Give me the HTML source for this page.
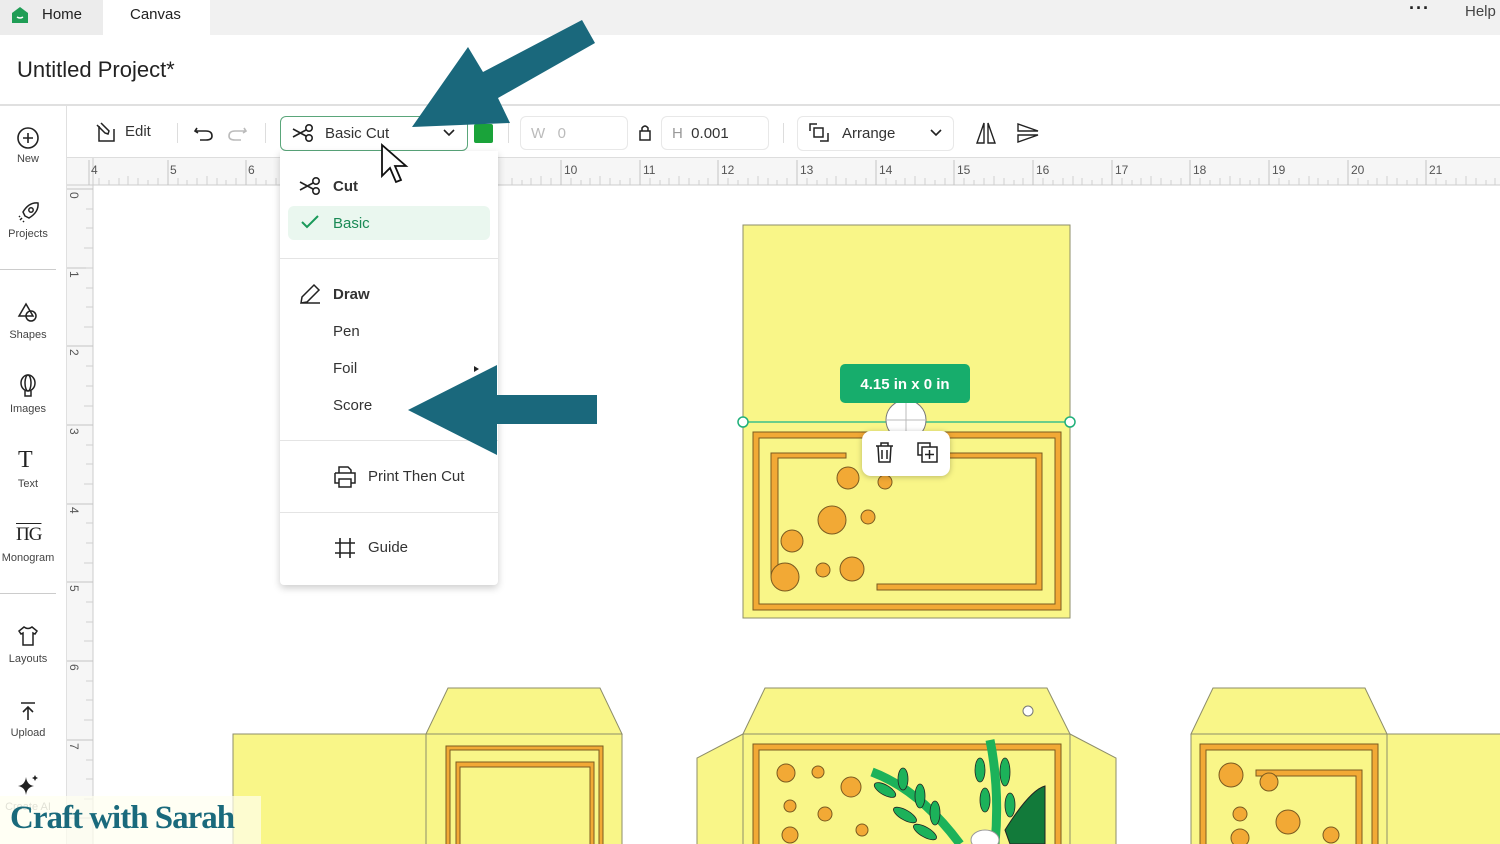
<!DOCTYPE html>
<html><head><meta charset="utf-8"><style>
*{margin:0;padding:0;box-sizing:border-box}
body{width:1500px;height:844px;overflow:hidden;background:#fff;font-family:"Liberation Sans",sans-serif;color:#222;position:relative}
.abs{position:absolute}
.lbl{position:absolute;width:56px;text-align:center;font-size:11px;color:#444}
.mi{position:absolute;font-size:15px;color:#333}
</style></head><body>
<!-- top tabs -->
<div class="abs" style="left:0;top:0;width:1500px;height:35px;background:#f1f1f1"></div>
<div class="abs" style="left:0;top:0;width:103px;height:35px;background:#ececec"></div>
<div class="abs" style="left:103px;top:0;width:107px;height:35px;background:#fff"></div>
<svg class="abs" style="left:10px;top:5px" width="20" height="20"><path d="M2 8 L10 2 L18 8 V18 H2 Z" fill="#1f9d55"/><path d="M7 12 Q10 14 13 12" stroke="#fff" stroke-width="1.5" fill="none"/></svg>
<div class="abs" style="left:42px;top:6px;font-size:15px;color:#222">Home</div>
<div class="abs" style="left:130px;top:6px;font-size:15px;color:#222">Canvas</div>
<div class="abs" style="left:1409px;top:-2px;font-size:18px;letter-spacing:1px;font-weight:bold">···</div>
<div class="abs" style="left:1465px;top:3px;font-size:15px;color:#444">Help</div>
<!-- title -->
<div class="abs" style="left:17px;top:57px;font-size:22px;color:#222">Untitled Project*</div>
<div class="abs" style="left:0;top:104px;width:1500px;height:2px;background:#e0e0e0"></div>
<!-- sidebar -->
<div class="abs" style="left:66px;top:106px;width:1px;height:738px;background:#e0e0e0"></div>
<svg class="abs" style="left:16px;top:126px" width="24" height="24" fill="none" stroke="#222" stroke-width="1.6"><circle cx="12" cy="12" r="10"/><path d="M12 7v10M7 12h10"/></svg>
<div class="lbl" style="left:0;top:153px">New</div>
<svg class="abs" style="left:17px;top:200px" width="24" height="24" fill="none" stroke="#222" stroke-width="1.5"><path d="M8 16 L6 12 Q12 2 21 3 Q22 12 12 18 Z"/><circle cx="14" cy="10" r="2.2"/><path d="M3 20l2-2M6 22l1-1M2 17l1-1"/></svg>
<div class="lbl" style="left:0;top:228px">Projects</div>
<div class="abs" style="left:0;top:269px;width:56px;height:1px;background:#ccc"></div>
<svg class="abs" style="left:16px;top:300px" width="24" height="24" fill="none" stroke="#222" stroke-width="1.5"><path d="M3 16 L10 4 L17 16 Z"/><circle cx="15" cy="16" r="5"/></svg>
<div class="lbl" style="left:0;top:329px">Shapes</div>
<svg class="abs" style="left:16px;top:374px" width="24" height="26" fill="none" stroke="#222" stroke-width="1.5"><ellipse cx="12" cy="9" rx="7" ry="8"/><ellipse cx="12" cy="9" rx="3" ry="8"/><path d="M9 17v5h6v-5"/></svg>
<div class="lbl" style="left:0;top:403px">Images</div>
<div class="abs" style="left:18px;top:447px;font-family:'Liberation Serif',serif;font-size:24px;color:#222">T</div>
<div class="lbl" style="left:0;top:478px">Text</div>
<div class="abs" style="left:16px;top:524px;font-family:'Liberation Serif',serif;font-size:19px;color:#222;letter-spacing:-1px;text-decoration:overline">ΠG</div>
<div class="lbl" style="left:0;top:552px">Monogram</div>
<div class="abs" style="left:0;top:593px;width:56px;height:1px;background:#ccc"></div>
<svg class="abs" style="left:16px;top:624px" width="24" height="24" fill="none" stroke="#222" stroke-width="1.5"><path d="M8 3 L3 7 L5 10 L7 9 V21 H17 V9 L19 10 L21 7 L16 3 Q12 6 8 3Z"/></svg>
<div class="lbl" style="left:0;top:653px">Layouts</div>
<svg class="abs" style="left:16px;top:699px" width="24" height="24" fill="none" stroke="#222" stroke-width="1.6"><path d="M5 4h14M12 21V8M7 13l5-5 5 5"/></svg>
<div class="lbl" style="left:0;top:727px">Upload</div>
<svg class="abs" style="left:16px;top:773px" width="24" height="24" fill="#222"><path d="M10 4 Q11 12 18 13 Q11 14 10 22 Q9 14 2 13 Q9 12 10 4Z"/><path d="M19 2l1 2 2 1-2 1-1 2-1-2-2-1 2-1z"/></svg>
<div class="lbl" style="left:0;top:801px;color:#999">Create AI</div>
<!-- toolbar -->
<svg class="abs" style="left:96px;top:120px" width="24" height="24" fill="none" stroke="#222" stroke-width="1.5"><path d="M3 6 V21 H18 V9"/><path d="M5 3 L13 11 L12 14 L9 13 L1 5"/></svg>
<div class="abs" style="left:125px;top:123px;font-size:15px;color:#333">Edit</div>
<div class="abs" style="left:177px;top:123px;width:1px;height:20px;background:#ddd"></div>
<svg class="abs" style="left:193px;top:122px" width="55" height="22" fill="none" stroke-width="1.6"><path d="M4 6 L2 9 L5 11M2 9 H13 Q19 9 19 14 Q19 18 13 18 H7" stroke="#222"/><path d="M51 6 L53 9 L50 11M53 9 H42 Q36 9 36 14 Q36 18 42 18 H48" stroke="#bbb"/></svg>
<div class="abs" style="left:265px;top:123px;width:1px;height:20px;background:#ddd"></div>
<div class="abs" style="left:280px;top:116px;width:188px;height:35px;border:1.5px solid #5aa67a;border-radius:6px"></div>
<svg class="abs" style="left:291px;top:123px" width="24" height="20" fill="none" stroke="#222" stroke-width="1.6"><circle cx="18" cy="5" r="3.2"/><circle cx="18" cy="15" r="3.2"/><path d="M15 7 L2 14M15 13 L2 6"/></svg>
<div class="abs" style="left:325px;top:125px;font-size:15px;color:#333">Basic Cut</div>
<svg class="abs" style="left:442px;top:128px" width="14" height="10" fill="none" stroke="#222" stroke-width="1.6"><path d="M2 2l5 5 5-5"/></svg>
<div class="abs" style="left:474px;top:124px;width:19px;height:19px;background:#1aa33a;border-radius:2px"></div>
<div class="abs" style="left:508px;top:123px;width:1px;height:20px;background:#ddd"></div>
<div class="abs" style="left:520px;top:116px;width:108px;height:34px;border:1px solid #e8e8e8;border-radius:6px;font-size:15px;color:#bbb;padding:8px 10px">W&nbsp;&nbsp;&nbsp;0</div>
<svg class="abs" style="left:638px;top:124px" width="14" height="18" fill="none" stroke="#222" stroke-width="1.5"><rect x="2" y="7" width="10" height="9"/><path d="M4 7V4Q7 0 10 4V7"/></svg>
<div class="abs" style="left:661px;top:116px;width:108px;height:34px;border:1px solid #e8e8e8;border-radius:6px;font-size:15px;color:#333;padding:8px 10px"><span style="color:#999">H</span>&nbsp;&nbsp;0.001</div>
<div class="abs" style="left:783px;top:123px;width:1px;height:20px;background:#ddd"></div>
<div class="abs" style="left:797px;top:116px;width:157px;height:35px;border:1px solid #e8e8e8;border-radius:6px"></div>
<svg class="abs" style="left:808px;top:122px" width="24" height="22" fill="none" stroke="#222" stroke-width="1.5"><path d="M9 2H2V9"/><rect x="6" y="6" width="9" height="9"/><path d="M12 19H20V11"/></svg>
<div class="abs" style="left:842px;top:125px;font-size:15px;color:#333">Arrange</div>
<svg class="abs" style="left:929px;top:128px" width="14" height="10" fill="none" stroke="#222" stroke-width="1.6"><path d="M2 2l5 5 5-5"/></svg>
<svg class="abs" style="left:974px;top:121px" width="24" height="24" fill="none" stroke="#222" stroke-width="1.4"><path d="M10 2 L3 22 H10 Z M14 2 L21 22 H14 Z"/></svg>
<svg class="abs" style="left:1016px;top:121px" width="24" height="24" fill="none" stroke="#222" stroke-width="1.4"><path d="M22 10 L2 3 V10 Z M22 14 L2 21 V14 Z"/></svg>
<div class="abs" style="left:67px;top:157px;width:1433px;height:1px;background:#ddd"></div>
<!-- rulers + canvas -->
<svg class="abs" style="left:0;top:0" width="1500" height="844">
<rect x="67" y="158" width="1433" height="27" fill="#f6f6f6"/>
<rect x="67" y="158" width="26" height="686" fill="#f6f6f6"/>
<line x1="67" y1="185" x2="1500" y2="185" stroke="#ccc"/>
<line x1="93" y1="158" x2="93" y2="844" stroke="#ccc"/>
<g stroke="#c4c4c4" stroke-width="1">
<path d="M89 160V185M168 160V185M246 160V185M325 160V185M404 160V185M482 160V185M561 160V185M640 160V185M718 160V185M797 160V185M876 160V185M954 160V185M1033 160V185M1112 160V185M1190 160V185M1269 160V185M1348 160V185M1426 160V185"/>
<path d="M93 189H67M93 268H67M93 346H67M93 425H67M93 504H67M93 582H67M93 661H67M93 740H67M93 818H67"/>
</g>
<g stroke="#d0d0d0" stroke-width="1">
<path d="M99 178V185M109 180V185M119 178V185M128 176V185M138 178V185M148 180V185M158 178V185M178 178V185M187 180V185M197 178V185M207 176V185M217 178V185M226 180V185M236 178V185M256 178V185M266 180V185M276 178V185M286 176V185M296 178V185M305 180V185M315 178V185M512 178V185M522 180V185M531 178V185M541 176V185M551 178V185M571 178V185M581 180V185M590 178V185M600 176V185M610 178V185M620 180V185M630 178V185M650 178V185M660 180V185M669 178V185M679 176V185M689 178V185M699 180V185M708 178V185M728 178V185M738 180V185M748 178V185M758 176V185M768 178V185M777 180V185M787 178V185M807 178V185M817 180V185M827 178V185M836 176V185M846 178V185M856 180V185M866 178V185M886 178V185M896 180V185M905 178V185M915 176V185M925 178V185M935 180V185M945 178V185M964 178V185M974 180V185M984 178V185M994 176V185M1004 178V185M1014 180V185M1023 178V185M1043 178V185M1053 180V185M1063 178V185M1073 176V185M1082 178V185M1092 180V185M1102 178V185M1122 178V185M1132 180V185M1141 178V185M1151 176V185M1161 178V185M1171 180V185M1181 178V185M1200 178V185M1210 180V185M1220 178V185M1230 176V185M1240 178V185M1250 180V185M1259 178V185M1279 178V185M1289 180V185M1299 178V185M1309 176V185M1318 178V185M1328 180V185M1338 178V185M1358 178V185M1368 180V185M1377 178V185M1387 176V185M1397 178V185M1407 180V185M1417 178V185M1436 178V185M1446 180V185M1456 178V185M1466 176V185M1476 178V185M1486 180V185M1495 178V185"/>
<path d="M86 209H93M86 228H93M84 248H93M86 268H93M86 288H93M86 307H93M84 327H93M86 366H93M86 386H93M84 406H93M86 445H93M86 464H93M84 484H93M86 523H93M86 543H93M84 563H93M86 602H93M86 622H93M84 641H93M86 681H93M86 700H93M84 720H93M86 760H93M86 779H93M84 799H93"/>
</g>
<g font-size="12" fill="#555" font-family="Liberation Sans">
<text x="91" y="174">4</text><text x="170" y="174">5</text><text x="248" y="174">6</text>
<text x="564" y="174">10</text><text x="643" y="174">11</text><text x="721" y="174">12</text><text x="800" y="174">13</text><text x="879" y="174">14</text><text x="957" y="174">15</text><text x="1036" y="174">16</text><text x="1115" y="174">17</text><text x="1193" y="174">18</text><text x="1272" y="174">19</text><text x="1351" y="174">20</text><text x="1429" y="174">21</text>
<text transform="translate(70,192) rotate(90)">0</text><text transform="translate(70,271) rotate(90)">1</text><text transform="translate(70,349) rotate(90)">2</text><text transform="translate(70,428) rotate(90)">3</text><text transform="translate(70,507) rotate(90)">4</text><text transform="translate(70,585) rotate(90)">5</text><text transform="translate(70,664) rotate(90)">6</text><text transform="translate(70,743) rotate(90)">7</text>
</g>
<g stroke="#8d8d6a" stroke-width="1">
<rect x="743" y="225" width="327" height="393" fill="#f9f688"/>
<rect x="753" y="432" width="308" height="178" fill="#f2a935" stroke="#7a5a20"/>
<rect x="759" y="438" width="296" height="166" fill="#f9f688" stroke="#7a5a20"/>
<path d="M771 453H846V458H778V577H771Z M877 584H1036V458H948V453H1042V590H877Z" fill="#f2a935" stroke="#7a5a20"/>
</g>
<g fill="#f2a935" stroke="#7a5a20" stroke-width="1">
<circle cx="848" cy="478" r="11"/><circle cx="885" cy="482" r="7"/><circle cx="832" cy="520" r="14"/><circle cx="868" cy="517" r="7"/><circle cx="792" cy="541" r="11"/><circle cx="785" cy="577" r="14"/><circle cx="823" cy="570" r="7"/><circle cx="852" cy="569" r="12"/>
</g>
<line x1="743" y1="422" x2="1070" y2="422" stroke="#3cc08a" stroke-width="1.5"/>
<circle cx="743" cy="422" r="5" fill="#fff" stroke="#1fb07a" stroke-width="1.5"/>
<circle cx="1070" cy="422" r="5" fill="#fff" stroke="#1fb07a" stroke-width="1.5"/>
<circle cx="906" cy="420" r="20" fill="#fff" stroke="#777"/>
<path d="M906 400V440M886 420H926" stroke="#bbb"/>
<rect x="840" y="364" width="130" height="39" rx="5" fill="#17ad6c"/>
<text x="905" y="389" text-anchor="middle" fill="#fff" font-size="15" font-weight="bold" font-family="Liberation Sans">4.15  in x 0  in</text>
<rect x="862" y="431" width="88" height="45" rx="9" fill="#fff" style="filter:drop-shadow(0 1px 3px rgba(0,0,0,.25))"/>
<g fill="none" stroke="#222" stroke-width="1.5"><path d="M876 446H893M881 446V443H888V446M878 446L879 462H890L891 446M882 450V459M887 450V459"/><rect x="918" y="443" width="12" height="12"/><rect x="922" y="447" width="15" height="15" fill="#fff"/><path d="M929.5 450V459M925 454.5H934"/></g>
<g stroke="#8d8d6a" stroke-width="1" fill="#f9f688">
<rect x="233" y="734" width="193" height="120"/>
<path d="M426 734L448 688H600L622 734Z"/>
<rect x="426" y="734" width="196" height="120"/>
<rect x="446" y="746" width="157" height="110" fill="#f2a935" stroke="#7a5a20"/>
<rect x="450" y="750" width="149" height="110" stroke="#7a5a20"/>
<rect x="456" y="762" width="138" height="100" fill="#f2a935" stroke="#7a5a20"/>
<rect x="460" y="767" width="130" height="100" stroke="#7a5a20"/>
<path d="M743 734L697 758V854H743Z M1070 734L1116 758V854H1070Z"/>
<path d="M743 734L765 688H1047L1070 734Z"/>
<rect x="743" y="734" width="327" height="120"/>
<rect x="753" y="744" width="308" height="110" fill="#f2a935" stroke="#7a5a20"/>
<rect x="759" y="750" width="296" height="110" stroke="#7a5a20"/>
<path d="M1191 734L1213 688H1365L1387 734Z"/>
<rect x="1191" y="734" width="196" height="120"/>
<rect x="1387" y="734" width="120" height="120"/>
<rect x="1200" y="744" width="178" height="110" fill="#f2a935" stroke="#7a5a20"/>
<rect x="1206" y="750" width="166" height="110" stroke="#7a5a20"/>
<path d="M1256 770H1362V850H1356V776H1256Z" fill="#f2a935" stroke="#7a5a20"/>
</g>
<circle cx="1028" cy="711" r="5" fill="#fff" stroke="#777"/>
<g fill="#f2a935" stroke="#7a5a20"><circle cx="786" cy="773" r="9"/><circle cx="818" cy="772" r="6"/><circle cx="851" cy="787" r="10"/><circle cx="790" cy="806" r="6"/><circle cx="825" cy="814" r="7"/><circle cx="862" cy="830" r="6"/><circle cx="790" cy="835" r="8"/>
<circle cx="1231" cy="775" r="12"/><circle cx="1269" cy="782" r="9"/><circle cx="1240" cy="814" r="7"/><circle cx="1288" cy="822" r="12"/><circle cx="1240" cy="838" r="9"/><circle cx="1331" cy="835" r="8"/></g>
<path d="M1045 786Q1030 790 1005 830L1010 844H1045Z" fill="#127a3a" stroke="#222"/>
<path d="M872 772Q920 790 960 844M990 740Q1000 790 995 844" stroke="#1cb25a" stroke-width="9" fill="none"/>
<g fill="#1cb25a" stroke="#222" stroke-width=".8"><ellipse cx="885" cy="790" rx="12" ry="5" transform="rotate(30 885 790)"/><ellipse cx="903" cy="779" rx="5" ry="11"/><ellipse cx="920" cy="796" rx="5" ry="12"/><ellipse cx="935" cy="813" rx="5" ry="12"/><ellipse cx="905" cy="815" rx="13" ry="5" transform="rotate(30 905 815)"/><ellipse cx="925" cy="832" rx="13" ry="5" transform="rotate(30 925 832)"/><ellipse cx="980" cy="770" rx="5" ry="12"/><ellipse cx="1005" cy="772" rx="5" ry="14"/><ellipse cx="985" cy="800" rx="5" ry="12"/><ellipse cx="1010" cy="805" rx="5" ry="12"/></g>
<ellipse cx="985" cy="840" rx="14" ry="10" fill="#fff" stroke="#999"/>
</svg>
<!-- dropdown -->
<div class="abs" style="left:280px;top:151px;width:218px;height:434px;background:#fff;box-shadow:0 3px 8px rgba(0,0,0,.2);border-radius:0 0 4px 4px"></div>
<svg class="abs" style="left:298px;top:176px" width="24" height="20" fill="none" stroke="#222" stroke-width="1.6"><circle cx="18" cy="5" r="3.2"/><circle cx="18" cy="15" r="3.2"/><path d="M15 7 L2 14M15 13 L2 6"/></svg>
<div class="mi" style="left:333px;top:178px;font-weight:bold">Cut</div>
<div class="abs" style="left:288px;top:206px;width:202px;height:34px;background:#eaf7ef;border-radius:6px"></div>
<svg class="abs" style="left:300px;top:214px" width="20" height="16" fill="none" stroke="#1a9a5a" stroke-width="2"><path d="M2 8l5 5L18 2"/></svg>
<div class="mi" style="left:333px;top:215px;color:#1a8a55">Basic</div>
<div class="abs" style="left:280px;top:258px;width:218px;height:1px;background:#e4e4e4"></div>
<svg class="abs" style="left:298px;top:282px" width="24" height="24" fill="none" stroke="#222" stroke-width="1.5"><path d="M3 21H22M3 21L4 15L16 3L21 8L9 20Z"/></svg>
<div class="mi" style="left:333px;top:286px;font-weight:bold">Draw</div>
<div class="mi" style="left:333px;top:323px">Pen</div>
<div class="mi" style="left:333px;top:360px">Foil</div>
<div class="abs" style="left:474px;top:366px;border-left:5px solid #222;border-top:3px solid transparent;border-bottom:3px solid transparent"></div>
<div class="mi" style="left:333px;top:397px">Score</div>
<div class="abs" style="left:280px;top:440px;width:218px;height:1px;background:#e4e4e4"></div>
<svg class="abs" style="left:333px;top:465px" width="24" height="24" fill="none" stroke="#222" stroke-width="1.5"><path d="M6 8V2H15L18 5V8M2 8H22V18H18M6 18H2V8"/><rect x="6" y="14" width="12" height="8"/></svg>
<div class="mi" style="left:368px;top:468px">Print Then Cut</div>
<div class="abs" style="left:280px;top:512px;width:218px;height:1px;background:#e4e4e4"></div>
<svg class="abs" style="left:334px;top:537px" width="22" height="22" fill="none" stroke="#222" stroke-width="1.6"><path d="M6 1V21M16 1V21M1 6H21M1 16H21"/></svg>
<div class="mi" style="left:368px;top:539px">Guide</div>
<!-- arrows on top -->
<svg class="abs" style="left:0;top:0" width="620" height="470">
<path d="M412 127L468 47L483 72L582 20L595 43L498 98L510 123Z" fill="#1a687c"/>
<path d="M408 410L497 365V395H597V424H497V455Z" fill="#1a687c"/>
</svg>
<!-- cursor -->
<svg class="abs" style="left:380px;top:143px" width="34" height="44"><path d="M2 2V33L10 25L16 39L21 37L15 23H26Z" fill="#fff" stroke="#111" stroke-width="1.8"/></svg>
<!-- watermark -->
<div class="abs" style="left:0;top:796px;width:261px;height:48px;background:rgba(255,255,240,.7)"></div>
<div class="abs" style="left:10px;top:800px;font-family:'Liberation Serif',serif;font-weight:bold;font-size:33px;color:#1a6a7c;letter-spacing:-1px">Craft with Sarah</div>
</body></html>
